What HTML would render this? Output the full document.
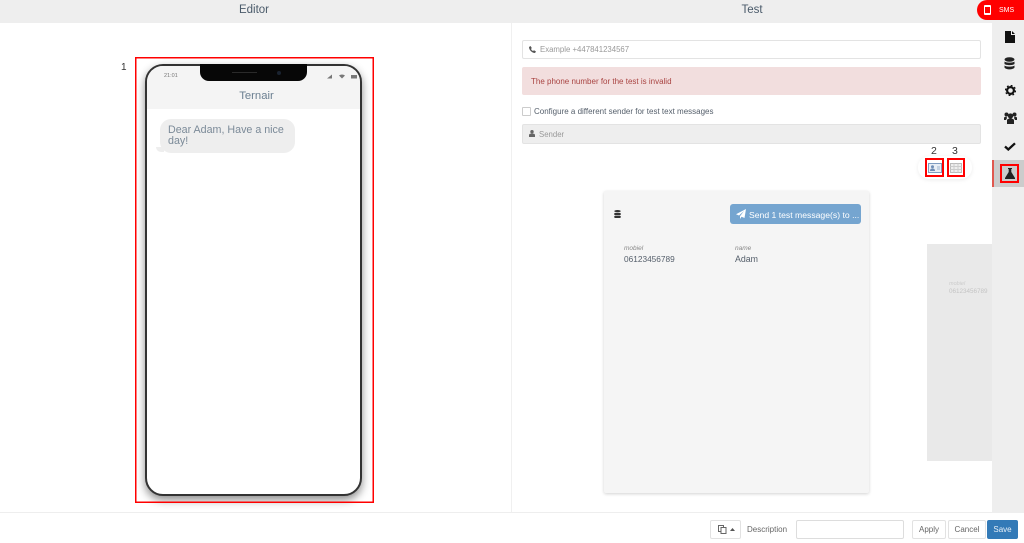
<!DOCTYPE html>
<html><head><meta charset="utf-8"><style>
html,body{margin:0;padding:0;background:#fff}
body{width:1024px;height:543px;position:relative;overflow:hidden;font-family:"Liberation Sans",sans-serif;color:#555}
.a{position:absolute;box-sizing:border-box;white-space:nowrap}
.rb{border:2px solid #f00}
svg{position:absolute;display:block}
</style></head><body>
<div class="a" style="left:0;top:0;width:1024px;height:23px;background:#eee"></div>
<div class="a" style="left:0;top:4px;width:508px;text-align:center;font-size:11.500px;color:#4a5a6a">Editor</div>
<div class="a" style="left:508px;top:4px;width:488px;text-align:center;font-size:11.500px;color:#4a5a6a">Test</div>
<div class="a" style="left:511px;top:23px;width:1px;height:489px;background:#f0f0f0"></div>

<!-- SMS badge -->
<div class="a" style="left:977px;top:0;width:47px;height:20px;background:#f00;border-radius:10px 0 0 10px"></div>
<div class="a" style="left:984px;top:5px;width:7px;height:10px;border:1.500px solid #fff;border-width:2px 1px;border-radius:1px"></div>
<div class="a" style="left:999px;top:7px;font-size:7px;color:#fff">SMS</div>

<!-- sidebar -->
<div class="a" style="left:992px;top:23px;width:32px;height:489px;background:#eee"></div>
<div class="a" style="left:992px;top:160px;width:32px;height:27px;background:#ccc"></div>
<div class="a" style="left:992px;top:160px;width:2px;height:27px;background:#e0584f"></div>
<svg style="left:1005px;top:31px" width="10" height="12" viewBox="0 0 10 12"><path d="M0 0H6V4H10V12H0ZM7 0L10 3H7Z" fill="#111"/></svg>
<svg style="left:1004px;top:57px" width="11" height="13" viewBox="0 0 11 13"><ellipse cx="5.500" cy="2.500" rx="5" ry="2.300" fill="#222"/><path d="M.5 4.500C2 6 9 6 10.500 4.500V7C9 8.500 2 8.500 .5 7ZM.5 8.500C2 10 9 10 10.500 8.500V10.500C9 13 2 13 .5 10.500Z" fill="#222"/></svg>
<svg style="left:1005px;top:85px" width="11" height="11" viewBox="0 0 11 11"><circle cx="5.500" cy="5.500" r="3.400" fill="none" stroke="#111" stroke-width="2.200"/><circle cx="5.500" cy="5.500" r="5" fill="none" stroke="#111" stroke-width="1.300" stroke-dasharray="1.800 2.130"/></svg>
<svg style="left:1004px;top:112px" width="13" height="12" viewBox="0 0 13 12"><circle cx="6.500" cy="4" r="2.600" fill="#222"/><circle cx="2.500" cy="2.500" r="2" fill="#222"/><circle cx="10.500" cy="2.500" r="2" fill="#222"/><path d="M3 12V8.500C3 7 4.500 6.500 6.500 6.500S10 7 10 8.500V12ZM0 8V6C0 5 1 4.800 2.500 4.800L3 6L2 8ZM13 8V6C13 5 12 4.800 10.500 4.800L10 6L11 8Z" fill="#222"/></svg>
<svg style="left:1004px;top:142px" width="12" height="9" viewBox="0 0 12 9"><path d="M1 4.500L4.300 7.500L11 1.300" fill="none" stroke="#111" stroke-width="2.300"/></svg>
<div class="a rb" style="left:1000px;top:164px;width:19px;height:19px"></div>
<svg style="left:1005px;top:168px" width="10" height="11" viewBox="0 0 10 11"><path d="M3 0H7V1H6.300V4L10 10V11H0V10L3.700 4V1H3Z" fill="#222"/></svg>

<!-- Editor -->
<div class="a" style="left:121px;top:62px;font-size:10px;color:#333">1</div>
<div class="a" style="left:145px;top:64px;width:217px;height:432px;background:#fff;border:2px solid #333;border-radius:18px;box-shadow:0 4px 9px rgba(0,0,0,.45);overflow:hidden">
  <div class="a" style="left:0;top:0;width:213px;height:43px;background:#f4f4f4"></div>
  <div class="a" style="left:17px;top:7px;font-size:5.500px;color:#777">21:01</div>
  <div class="a" style="left:3px;top:24px;width:213px;text-align:center;font-size:11.300px;color:#6b7f91">Ternair</div>
  <div class="a" style="left:13px;top:53px;width:135px;height:34px;background:#eee;border-radius:11px;padding:6px 0 0 8px;font-size:10.700px;line-height:11px;color:#7b8a98;white-space:normal">Dear Adam, Have a nice day!</div>
  <div class="a" style="left:9px;top:81px;width:8px;height:5px;background:#eee;border-radius:0 0 0 6px"></div>
</div>
<svg style="left:134px;top:56px" width="241" height="448" viewBox="0 0 241 448"><rect x="1.750" y="1.750" width="237.500" height="444.500" fill="none" stroke="#f00" stroke-width="1.500"/></svg>
<div class="a" style="left:200px;top:64px;width:107px;height:17px;background:#070707;border-radius:0 0 9px 9px"></div>
<div class="a" style="left:232px;top:72px;width:25px;height:1px;background:#2a2a2a"></div>
<div class="a" style="left:277px;top:71px;width:4px;height:4px;border-radius:50%;background:#1a2330"></div>
<svg style="left:327px;top:74px" width="32" height="5" viewBox="0 0 32 5"><path d="M0 4.500L5 .5V4.500Z" fill="#777"/><path d="M12 1.500Q15 -.5 18 1.500L15 4.500Z" fill="#777"/><rect x="24" y="1" width="6" height="3.500" fill="#777"/></svg>

<!-- Test form -->
<div class="a" style="left:522px;top:40px;width:459px;height:19px;border:1px solid #e3e3e3;border-radius:2px;background:#fff"></div>
<svg style="left:529px;top:46px" width="7" height="7" viewBox="0 0 7 7"><path d="M0 1L1.500 0L2.800 2L2 3C2.500 4 3.200 4.600 4 5L5 4.200L7 5.500L6 7C3 7 0 4 0 1Z" fill="#555"/></svg>
<div class="a" style="left:540px;top:45px;font-size:7.800px;color:#999">Example +447841234567</div>
<div class="a" style="left:522px;top:67px;width:459px;height:28px;background:#f2dede;border-radius:2px"></div>
<div class="a" style="left:531px;top:77px;font-size:8px;color:#a94442">The phone number for the test is invalid</div>
<div class="a" style="left:522px;top:107px;width:9px;height:9px;border:1px solid #ccc;background:#fff;border-radius:1px"></div>
<div class="a" style="left:534px;top:107px;font-size:8px;color:#555f6b">Configure a different sender for test text messages</div>
<div class="a" style="left:522px;top:124px;width:459px;height:20px;background:#eee;border:1px solid #e3e3e3;border-radius:2px"></div>
<svg style="left:529px;top:130px" width="6" height="7" viewBox="0 0 6 7"><circle cx="3" cy="1.700" r="1.700" fill="#666"/><path d="M0 7V5C0 4 1 3.500 3 3.500S6 4 6 5V7Z" fill="#666"/></svg>
<div class="a" style="left:539px;top:130px;font-size:7.800px;color:#999">Sender</div>

<div class="a" style="left:931px;top:145px;font-size:10.500px;color:#333">2</div>
<div class="a" style="left:952px;top:145px;font-size:10.500px;color:#333">3</div>
<div class="a" style="left:918px;top:156px;width:54px;height:23px;background:#fff;border-radius:11px;box-shadow:0 1px 4px rgba(0,0,0,.08)"></div>
<div class="a rb" style="left:925px;top:158px;width:19px;height:19px"></div>
<div class="a rb" style="left:947px;top:158px;width:18px;height:19px"></div>
<svg style="left:928px;top:163px" width="14" height="10" viewBox="0 0 14 10"><rect x=".5" y=".5" width="13" height="9" fill="#e8eef5" stroke="#7f9cc0"/><circle cx="4.500" cy="3.700" r="1.500" fill="#6f8db5"/><path d="M2 8C2 6 3 5.500 4.500 5.500S7 6 7 8Z" fill="#6f8db5"/><rect x="9" y="3" width="3" height="4" fill="#c4d2e2"/></svg>
<svg style="left:950px;top:163px" width="12" height="10" viewBox="0 0 12 10"><rect x=".5" y=".5" width="11" height="9" fill="#eee" stroke="#bbb"/><path d="M4 .5V9.500M8 .5V9.500M.5 3.500H11.500M.5 6.500H11.500" stroke="#ccc" stroke-width="1"/></svg>

<!-- Card -->
<div class="a" style="left:604px;top:191px;width:265px;height:302px;background:#f5f5f5;border-radius:2px;box-shadow:0 1px 3px rgba(0,0,0,.18)"></div>
<svg style="left:614px;top:210px" width="7" height="8" viewBox="0 0 7 8"><ellipse cx="3.500" cy="1.100" rx="3.300" ry="1.100" fill="#333"/><rect x=".2" y="2.900" width="6.600" height="2.200" rx="1" fill="#333"/><rect x=".2" y="5.800" width="6.600" height="2.200" rx="1" fill="#333"/></svg>
<div class="a" style="left:730px;top:204px;width:131px;height:20px;background:#75a5d0;border-radius:3px"></div>
<svg style="left:736px;top:209px" width="10" height="10" viewBox="0 0 10 10"><path d="M10 0L8.500 9L5.500 7.700L4 10V7.200L8 2L3 6.500L0 5.300Z" fill="#fff"/></svg>
<div class="a" style="left:749px;top:210px;font-size:8.650px;color:#fff">Send 1 test message(s) to ...</div>
<div class="a" style="left:624px;top:245px;font-size:6.500px;font-style:italic;color:#888">mobiel</div>
<div class="a" style="left:624px;top:254px;font-size:8.300px;color:#555f6b">06123456789</div>
<div class="a" style="left:735px;top:245px;font-size:6.500px;font-style:italic;color:#888">name</div>
<div class="a" style="left:735px;top:254px;font-size:8.800px;color:#555f6b">Adam</div>

<div class="a" style="left:927px;top:244px;width:65px;height:217px;background:#e9e9e9;overflow:hidden">
  <div class="a" style="left:22px;top:37px;font-size:5.500px;font-style:italic;color:#ccc">mobiel</div>
  <div class="a" style="left:22px;top:44px;font-size:6.300px;color:#c4c4c4">06123456789</div>
</div>

<!-- Footer -->
<div class="a" style="left:0;top:512px;width:1024px;height:1px;background:#eee"></div>
<div class="a" style="left:710px;top:520px;width:31px;height:19px;border:1px solid #e2e2e2;border-radius:2px;background:#fff"></div>
<svg style="left:718px;top:525px" width="9" height="9" viewBox="0 0 9 9"><rect x=".5" y=".5" width="5" height="6" fill="none" stroke="#666"/><rect x="3" y="2.500" width="5" height="6" fill="#fff" stroke="#666"/></svg>
<svg style="left:730px;top:528px" width="5" height="3" viewBox="0 0 5 3"><path d="M0 3L2.500 0L5 3Z" fill="#555"/></svg>
<div class="a" style="left:747px;top:525px;font-size:8px;color:#666">Description</div>
<div class="a" style="left:796px;top:520px;width:108px;height:19px;border:1px solid #ddd;border-radius:2px;background:#fff"></div>
<div class="a" style="left:912px;top:520px;width:34px;height:19px;border:1px solid #e2e2e2;border-radius:2px;text-align:center;font-size:8px;line-height:17px;color:#666">Apply</div>
<div class="a" style="left:948px;top:520px;width:38px;height:19px;border:1px solid #e2e2e2;border-radius:2px;text-align:center;font-size:8px;line-height:17px;color:#666">Cancel</div>
<div class="a" style="left:987px;top:520px;width:31px;height:19px;background:#337ab7;border-radius:2px;text-align:center;font-size:8px;line-height:19px;color:#e8f0f8">Save</div>
</body></html>
